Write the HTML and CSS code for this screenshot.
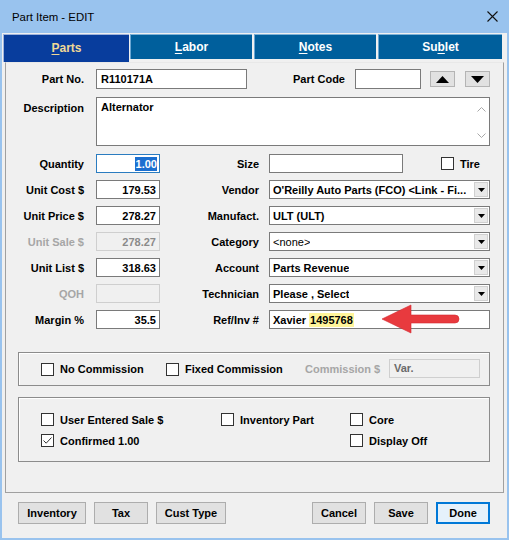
FILE: index.html
```
<!DOCTYPE html>
<html>
<head>
<meta charset="utf-8">
<link rel="stylesheet" href="styles.css">
</head>
<body>
<div class="window">
  <div class="titlebar">
    <span class="title">Part Item - EDIT</span>
    <svg class="close" width="11" height="11" viewBox="0 0 11 11"><path d="M0.5 0.5 L10.5 10.5 M10.5 0.5 L0.5 10.5" stroke="#111" stroke-width="1.1" fill="none"/></svg>
  </div>
  <div class="client">
    <div class="tabs">
      <div class="tab tab-parts active"><u>P</u>arts</div>
      <div class="tab tab-labor"><u>L</u>abor</div>
      <div class="tab tab-notes"><u>N</u>otes</div>
      <div class="tab tab-sublet">Su<u>b</u>let</div>
    </div>
    <div class="panel">
      <div class="row row-first">
        <div class="lbl">Part No.</div>
        <div class="field f-partno">R110171A</div>
        <div class="lbl lbl-code">Part Code</div>
        <div class="field f-code"></div>
        <div class="arrowbtn btn-up"><svg width="13" height="7" viewBox="0 0 13 7"><path d="M0 7 L6.5 0 L13 7 Z" fill="#000"/></svg></div>
        <div class="arrowbtn btn-down"><svg width="13" height="7" viewBox="0 0 13 7"><path d="M0 0 L6.5 7 L13 0 Z" fill="#000"/></svg></div>
      </div>
      <div class="row row-desc">
        <div class="lbl lbl-desc">Description</div>
        <div class="field f-desc">Alternator
          <svg class="sc sc-up" width="9" height="5" viewBox="0 0 9 5"><path d="M0.5 4.5 L4.5 0.5 L8.5 4.5" stroke="#a8a8a8" fill="none"/></svg>
          <svg class="sc sc-down" width="9" height="5" viewBox="0 0 9 5"><path d="M0.5 0.5 L4.5 4.5 L8.5 0.5" stroke="#a8a8a8" fill="none"/></svg>
        </div>
      </div>
      <div class="row row-q">
        <div class="lbl">Quantity</div>
        <div class="field num focus"><span class="sel">1.00</span></div>
        <div class="lbl lbl-r">Size</div>
        <div class="field f-size"></div>
        <div class="cb cb-tire"></div><span class="cbtext">Tire</span>
      </div>
      <div class="row">
        <div class="lbl">Unit Cost $</div>
        <div class="field num">179.53</div>
        <div class="lbl lbl-r">Vendor</div>
        <div class="field sel-field"><span class="seltext">O'Reilly Auto Parts (FCO) &lt;Link - Fi...</span><span class="dd"><svg width="7" height="4" viewBox="0 0 7 4"><path d="M0 0 L3.5 4 L7 0 Z" fill="#000"/></svg></span></div>
      </div>
      <div class="row">
        <div class="lbl">Unit Price $</div>
        <div class="field num">278.27</div>
        <div class="lbl lbl-r">Manufact.</div>
        <div class="field sel-field"><span class="seltext">ULT (ULT)</span><span class="dd"><svg width="7" height="4" viewBox="0 0 7 4"><path d="M0 0 L3.5 4 L7 0 Z" fill="#000"/></svg></span></div>
      </div>
      <div class="row">
        <div class="lbl dis">Unit Sale $</div>
        <div class="field num disabled">278.27</div>
        <div class="lbl lbl-r">Category</div>
        <div class="field sel-field"><span class="seltext normal">&lt;none&gt;</span><span class="dd"><svg width="7" height="4" viewBox="0 0 7 4"><path d="M0 0 L3.5 4 L7 0 Z" fill="#000"/></svg></span></div>
      </div>
      <div class="row">
        <div class="lbl">Unit List $</div>
        <div class="field num">318.63</div>
        <div class="lbl lbl-r">Account</div>
        <div class="field sel-field"><span class="seltext">Parts Revenue</span><span class="dd"><svg width="7" height="4" viewBox="0 0 7 4"><path d="M0 0 L3.5 4 L7 0 Z" fill="#000"/></svg></span></div>
      </div>
      <div class="row">
        <div class="lbl dis">QOH</div>
        <div class="field num disabled"></div>
        <div class="lbl lbl-r">Technician</div>
        <div class="field sel-field"><span class="seltext">Please , Select</span><span class="dd"><svg width="7" height="4" viewBox="0 0 7 4"><path d="M0 0 L3.5 4 L7 0 Z" fill="#000"/></svg></span></div>
      </div>
      <div class="row">
        <div class="lbl">Margin %</div>
        <div class="field num">35.5</div>
        <div class="lbl lbl-r">Ref/Inv #</div>
        <div class="field f-ref">Xavier <span class="hl">1495768</span>
          <svg class="redarrow" width="82" height="32" viewBox="0 0 82 32"><path d="M1 15 L30 1 L30 11 L74 11 Q78 11 78 15 Q78 19 74 19 L30 19 L30 29 Z" fill="#e83a3e" stroke="#d42a30" stroke-width="0.6" stroke-linejoin="round"/></svg>
        </div>
      </div>
      <div class="group g1">
        <div class="gi gi-nc"><div class="cb"></div><span class="cbtext">No Commission</span></div>
        <div class="gi gi-fc"><div class="cb"></div><span class="cbtext">Fixed Commission</span></div>
        <div class="comm-lbl">Commission $</div>
        <div class="field disabled f-comm">Var.</div>
      </div>
      <div class="group g2">
        <div class="g2row">
          <div class="gi c1"><div class="cb"></div><span class="cbtext">User Entered Sale $</span></div>
          <div class="gi c2"><div class="cb"></div><span class="cbtext">Inventory Part</span></div>
          <div class="gi c3"><div class="cb"></div><span class="cbtext">Core</span></div>
        </div>
        <div class="g2row">
          <div class="gi c1"><div class="cb checked"><svg width="11" height="11" viewBox="0 0 11 11"><path d="M1.5 5.5 L4.2 8.2 L9.5 2.5" stroke="#333" stroke-width="1" fill="none"/></svg></div><span class="cbtext">Confirmed 1.00</span></div>
          <div class="gi c2 empty"></div>
          <div class="gi c3"><div class="cb"></div><span class="cbtext">Display Off</span></div>
        </div>
      </div>
    </div>
    <div class="buttons">
      <div class="btn b-inv">Inventory</div>
      <div class="btn b-tax">Tax</div>
      <div class="btn b-cust">Cust Type</div>
      <div class="spacer"></div>
      <div class="btn b-cancel">Cancel</div>
      <div class="btn b-save">Save</div>
      <div class="btn b-done">Done</div>
    </div>
  </div>
</div>
</body>
</html>
```
FILE: styles.css
```
* { box-sizing: border-box; }
html, body { margin: 0; padding: 0; }
body { width: 509px; height: 540px; overflow: hidden; background: #99c2ec; font-family: "Liberation Sans", Arial, sans-serif; }
.window { width: 509px; height: 540px; background: #99c3ee; display: flex; flex-direction: column; }
.titlebar { height: 33px; display: flex; align-items: center; padding-left: 12px; position: relative; }
.title { font-size: 11.4px; color: #000; }
.close { position: absolute; left: 487px; top: 11px; }
.client { margin: 0 2px 2px 2px; flex: 1; background: #f0f0f0; display: flex; flex-direction: column; }
.tabs { display: flex; height: 29px; padding-top: 1px; padding-left: 1px; align-items: flex-start; }
.tab { height: 28px; color: #fff; font-weight: bold; font-size: 12px; display: flex; align-items: center; justify-content: center; background: #005f9c; border-top: 1px solid #7fb2d8; border-left: 1px solid #6aa6d2; padding-bottom: 1px; }
.tab u { text-decoration-thickness: 1px; text-underline-offset: 2px; }
.tab-parts { width: 126px; background: #083d9d; color: #efd996; border-top: 1px solid #9fb4dc; border-left: 1px solid #9fb4dc; padding-bottom: 2px; }
.tab-labor { width: 122px; margin-left: 1px; height: 25px; }
.tab-notes { width: 122px; margin-left: 2px; height: 25px; }
.tab-sublet { width: 124px; margin-left: 2px; height: 25px; }
.panel { margin-left: 3px; width: 499px; height: 431px; border: 1px solid #a0a0a0; border-top: 1px solid #e8e8e8; padding-top: 6px; display: flex; flex-direction: column; }
.row { display: flex; align-items: center; height: 19px; margin-top: 7px; }
.row-first { height: 20px; margin-top: 0; }
.row-desc { height: 49px; margin-top: 8px; align-items: flex-start; }
.row-q { margin-top: 8px; }
.lbl { width: 78px; text-align: right; font-weight: bold; font-size: 11px; color: #000; margin-right: 12px; white-space: nowrap; }
.lbl.dis { color: #a6a6a6; }
.lbl-desc { margin-top: 5px; }
.lbl-r { width: 99px; margin-left: 0; margin-right: 10px; }
.lbl-code { width: 98px; margin-right: 10px; }
.field { height: 100%; background: #fff; border: 1px solid #7a7a7a; font-weight: bold; font-size: 11px; color: #000; display: flex; align-items: center; padding: 0 3px; white-space: nowrap; overflow: hidden; }
.num { width: 64px; justify-content: flex-end; }
.focus { border-color: #2a7cc0; padding-right: 2px; }
.sel { background: #1b6fd0; color: #fff; padding: 1px 0 1px 1px; }
.disabled { background: #f0f0f0; border-color: #cfcfcf; color: #8a8a8a; }
.f-partno { width: 151px; padding-left: 4px; }
.f-code { width: 66px; }
.arrowbtn { width: 25px; height: 16px; background: #e1e1e1; border: 1px solid #b4b4b4; display: flex; align-items: center; justify-content: center; }
.btn-up { margin-left: 9px; }
.btn-down { margin-left: 10px; }
.f-desc { width: 394px; align-items: flex-start; padding: 3px 4px; position: relative; }
.sc { position: absolute; left: 380px; }
.sc-up { top: 9px; }
.sc-down { top: 35px; }
.f-size { width: 134px; }
.cb { width: 13px; height: 13px; background: #fff; border: 1px solid #333; flex: none; display: flex; align-items: center; justify-content: center; }
.cb-tire { margin-left: 38px; }
.cbtext { font-weight: bold; font-size: 11px; color: #000; margin-left: 6px; white-space: nowrap; }
.sel-field { width: 221px; justify-content: space-between; padding-right: 1px; }
.seltext { overflow: hidden; }
.seltext.normal { font-weight: normal; }
.dd { width: 14px; height: 15px; background: #e9e9e9; border: 1px solid #d0d0d0; display: flex; align-items: center; justify-content: center; }
.f-ref { width: 221px; position: relative; overflow: visible; padding-left: 3px; }
.hl { background: #fff59a; padding: 1px 1px; margin-left: 3px; }
.redarrow { position: absolute; left: 111px; top: -7px; }
.group { margin-left: 12px; width: 472px; border: 1px solid #8c8c8c; box-shadow: 1px 1px 0 #fff inset; }
.g1 { margin-top: 23px; height: 34px; display: flex; align-items: center; padding-left: 22px; }
.gi { display: flex; align-items: center; }
.gi-nc { width: 125px; }
.gi-fc { width: 139px; }
.comm-lbl { width: 84px; font-weight: bold; font-size: 11px; color: #a6a6a6; white-space: nowrap; }
.f-comm { width: 91px; height: 19px; padding-left: 4px; color: #6a6a6a; margin-top: -2px; }
.g2 { margin-top: 11px; height: 65px; padding-top: 15px; padding-left: 22px; display: flex; flex-direction: column; gap: 8px; }
.g2row { display: flex; height: 13px; }
.c1 { width: 180px; }
.c2 { width: 129px; }
.c3 { width: 120px; }
.buttons { display: flex; margin-top: 9px; padding-left: 16px; height: 22px; }
.btn { height: 22px; background: #e1e1e1; border: 1px solid #adadad; font-weight: bold; font-size: 11px; color: #000; display: flex; align-items: center; justify-content: center; margin-right: 8px; }
.b-inv { width: 68px; }
.b-tax { width: 54px; }
.b-cust { width: 70px; }
.spacer { flex: 1; }
.b-cancel { width: 54px; }
.b-save { width: 54px; }
.b-done { width: 54px; background: #e5f1fb; border: 1px solid #0078d7; box-shadow: 0 0 0 1px #0078d7 inset; margin-right: 17px; }
```
